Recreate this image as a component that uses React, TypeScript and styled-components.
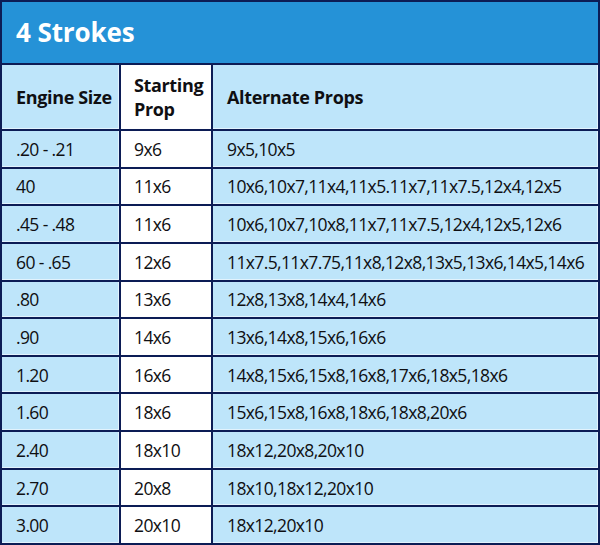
import React from "react";
import styled, { createGlobalStyle } from "styled-components";

const Global = createGlobalStyle`
  html, body { margin: 0; padding: 0; background: #ffffff; }
  body { font-family: "Open Sans", "Noto Sans", sans-serif; }
`;

const Sheet = styled.div`
  box-sizing: border-box;
  width: 600px;
  height: 545px;
  display: grid;
  grid-template-columns: 117px 90px 1fr;
  grid-template-rows: 61px 64px repeat(11, 1fr);
  gap: 2px;
  padding: 2px;
  background: #0c1c55;
`;

const Title = styled.div`
  grid-column: 1 / -1;
  background: #2592d7;
  color: #ffffff;
  font-weight: 700;
  font-size: 26px;
  letter-spacing: -0.1px;
  display: flex;
  align-items: center;
  padding-left: 14px;
  padding-bottom: 1px;
`;

const Cell = styled.div<{ $white?: boolean; $head?: boolean }>`
  background: ${(p) => (p.$white ? "#ffffff" : "#bee5fa")};
  box-shadow: inset -1px -1px 0 rgba(255, 255, 255, 0.55);
  color: #0f0f12;
  display: flex;
  align-items: center;
  padding-left: ${(p) => (p.$white ? 13 : 14)}px;
  font-size: ${(p) => (p.$head ? 18 : 17.5)}px;
  font-weight: ${(p) => (p.$head ? 700 : 400)};
  letter-spacing: ${(p) => (p.$head ? "-0.35px" : "-0.62px")};
  line-height: ${(p) => (p.$head ? "24px" : "20px")};
  white-space: nowrap;
`;

const rows: [string, string, string][] = [
  [".20 - .21", "9x6", "9x5,10x5"],
  ["40", "11x6", "10x6,10x7,11x4,11x5.11x7,11x7.5,12x4,12x5"],
  [".45 - .48", "11x6", "10x6,10x7,10x8,11x7,11x7.5,12x4,12x5,12x6"],
  ["60 - .65", "12x6", "11x7.5,11x7.75,11x8,12x8,13x5,13x6,14x5,14x6"],
  [".80", "13x6", "12x8,13x8,14x4,14x6"],
  [".90", "14x6", "13x6,14x8,15x6,16x6"],
  ["1.20", "16x6", "14x8,15x6,15x8,16x8,17x6,18x5,18x6"],
  ["1.60", "18x6", "15x6,15x8,16x8,18x6,18x8,20x6"],
  ["2.40", "18x10", "18x12,20x8,20x10"],
  ["2.70", "20x8", "18x10,18x12,20x10"],
  ["3.00", "20x10", "18x12,20x10"],
];

export default function App() {
  return (
    <>
      <Global />
      <Sheet>
        <Title>4 Strokes</Title>
        <Cell $head>Engine Size</Cell>
        <Cell $head $white>
          Starting
          <br />
          Prop
        </Cell>
        <Cell $head>Alternate Props</Cell>
        {rows.map(([a, b, c]) => (
          <React.Fragment key={a}>
            <Cell>{a}</Cell>
            <Cell $white>{b}</Cell>
            <Cell>{c}</Cell>
          </React.Fragment>
        ))}
      </Sheet>
    </>
  );
}
